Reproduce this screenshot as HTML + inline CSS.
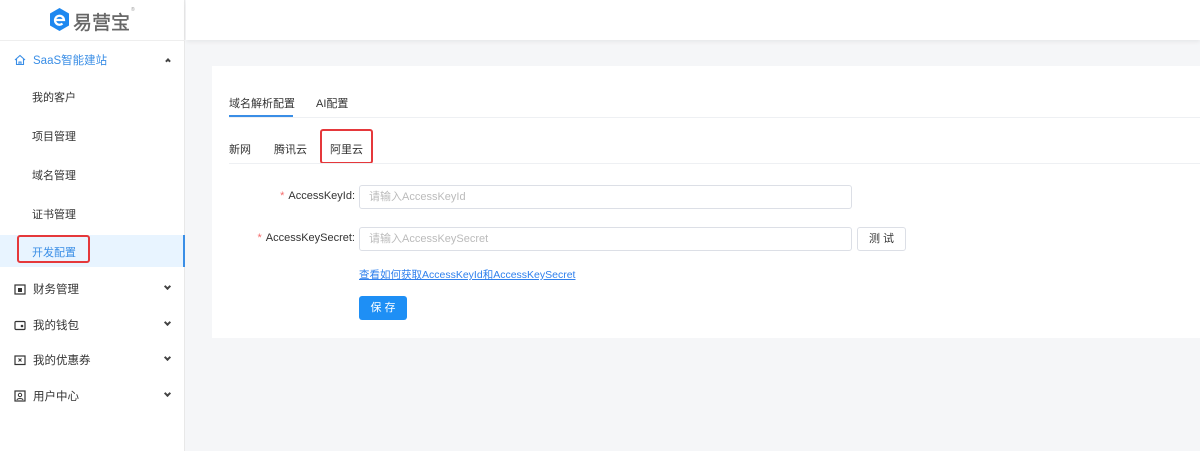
<!DOCTYPE html>
<html><head><meta charset="utf-8"><style>
*{margin:0;padding:0;box-sizing:border-box}
body{width:1200px;height:451px;overflow:hidden;background:#f5f6f8;font-family:"Liberation Sans","Noto Sans CJK SC",sans-serif;font-size:11px;color:#333;position:relative}
.side{position:absolute;left:0;top:0;width:185px;height:451px;background:#fff;border-right:1px solid #e8e8e8}
.hdr{position:absolute;left:186px;top:0;right:0;height:40px;background:#fff;box-shadow:0 2px 4px rgba(0,0,0,.06)}
.logo{position:absolute;left:0;top:0;width:185px;height:41px;border-bottom:1px solid #eee}
.a{position:absolute;white-space:nowrap}
.item{position:absolute;left:32px;font-size:11px;color:#333}
.grp{position:absolute;left:14px;font-size:11.5px;color:#333;display:flex;align-items:center;gap:7px}
.chev{position:absolute;left:165px;width:5px;height:5px;border-right:2px solid #444;border-bottom:2px solid #444;transform:rotate(45deg)}
.card{position:absolute;left:212px;top:66px;width:990px;height:272px;background:#fff}
.inp{position:absolute;height:24px;border:1px solid #dcdfe6;border-radius:3px;color:#bbb;font-size:11px;padding-left:9px;line-height:22px}
.lbl{position:absolute;right:845px;font-size:11px;color:#333}
.lbl b{color:#f56c6c;font-weight:normal;margin-right:4px}
</style></head><body>
<div class="side">
 <div class="logo">
  <svg class="a" style="left:49px;top:8px" width="21" height="23" viewBox="0 0 21 23"><polygon points="10.5,0 20,5.5 20,17.5 10.5,23 1,17.5 1,5.5" fill="#1e88f0"/><path d="M6 12h9a4.5 4.5 0 1 0-1.5 3.6" stroke="#fff" stroke-width="2.2" fill="none"/></svg>
  <div class="a" style="left:73px;top:8px;font-size:19px;color:#666;-webkit-text-stroke:0.4px #666">易营宝</div>
  <div class="a" style="left:131px;top:7px;font-size:5px;color:#999">®</div>
 </div>
 <div class="grp" style="top:52px;color:#3a8ee6"><svg width="12" height="12" viewBox="0 0 12 12"><path d="M1 6L6 1.5 11 6M2.5 5v5.5h7V5M5 10.5V8h2v2.5" stroke="#3a8ee6" fill="none" stroke-width="1.1"/></svg>SaaS智能建站</div>
 <div class="a" style="left:166px;top:59px;width:4px;height:4px;border-left:2px solid #444;border-top:2px solid #444;transform:rotate(45deg)"></div>
 <div class="item" style="top:89px">我的客户</div>
 <div class="item" style="top:128px">项目管理</div>
 <div class="item" style="top:167px">域名管理</div>
 <div class="item" style="top:206px">证书管理</div>
 <div class="a" style="left:0;top:235px;width:185px;height:32px;background:#e8f4ff;border-right:2px solid #3a8ee6"></div>
 <div class="a" style="left:17px;top:235px;width:73px;height:28px;border:2px solid #e5383b;border-radius:3px"></div>
 <div class="item" style="top:244px;color:#3a8ee6">开发配置</div>
 <div class="grp" style="top:281px"><svg width="12" height="12" viewBox="0 0 12 12"><rect x="1" y="2" width="10" height="9" stroke="#333" fill="none" stroke-width="1.2"/><rect x="4" y="5" width="4" height="4" fill="#333"/></svg>财务管理</div>
 <div class="chev" style="top:284px"></div>
 <div class="grp" style="top:317px"><svg width="12" height="12" viewBox="0 0 12 12"><rect x="1" y="2.5" width="10" height="8" rx="1" stroke="#333" fill="none" stroke-width="1.2"/><circle cx="8" cy="7" r="1.3" fill="#333"/></svg>我的钱包</div>
 <div class="chev" style="top:320px"></div>
 <div class="grp" style="top:352px"><svg width="12" height="12" viewBox="0 0 12 12"><rect x="1" y="2" width="10" height="8.5" stroke="#333" fill="none" stroke-width="1.2"/><path d="M4.5 4.5l3 3M7.5 4.5l-3 3" stroke="#333"/></svg>我的优惠券</div>
 <div class="chev" style="top:355px"></div>
 <div class="grp" style="top:388px"><svg width="12" height="12" viewBox="0 0 12 12"><rect x="1" y="1" width="10" height="10" stroke="#333" fill="none" stroke-width="1.2"/><circle cx="6" cy="5" r="1.7" stroke="#333" fill="none"/><path d="M3 10c.5-2 5.5-2 6 0" stroke="#333" fill="none"/></svg>用户中心</div>
 <div class="chev" style="top:391px"></div>
</div>
<div class="hdr"></div>
<div class="card"></div>
<div class="a" style="left:229px;top:95px;font-size:11px">域名解析配置</div>
<div class="a" style="left:316px;top:95px;font-size:11px">AI配置</div>
<div class="a" style="left:229px;top:117px;right:0;height:1px;background:#eef0f3"></div>
<div class="a" style="left:229px;top:115px;width:64px;height:2px;background:#3a8ee6"></div>
<div class="a" style="left:229px;top:141px;font-size:11px">新网</div>
<div class="a" style="left:274px;top:141px;font-size:11px">腾讯云</div>
<div class="a" style="left:330px;top:141px;font-size:11px">阿里云</div>
<div class="a" style="left:320px;top:129px;width:53px;height:35px;border:2px solid #e5383b;border-radius:3px"></div>
<div class="a" style="left:229px;top:163px;right:0;height:1px;background:#eef0f3"></div>
<div class="lbl" style="top:190px"><b>*</b>AccessKeyId:</div>
<div class="inp" style="left:359px;top:185px;width:493px">请输入AccessKeyId</div>
<div class="lbl" style="top:232px"><b>*</b>AccessKeySecret:</div>
<div class="inp" style="left:359px;top:227px;width:493px">请输入AccessKeySecret</div>
<div class="a" style="left:857px;top:227px;width:49px;height:24px;border:1px solid #dcdfe6;border-radius:3px;text-align:center;line-height:22px;font-size:11px">测 试</div>
<div class="a" style="left:359px;top:267px;font-size:10.5px;color:#2f80ed;text-decoration:underline">查看如何获取AccessKeyId和AccessKeySecret</div>
<div class="a" style="left:359px;top:296px;width:48px;height:24px;background:#1e8ff5;border-radius:3px;color:#fff;text-align:center;line-height:24px;font-size:11px">保 存</div>
</body></html>
